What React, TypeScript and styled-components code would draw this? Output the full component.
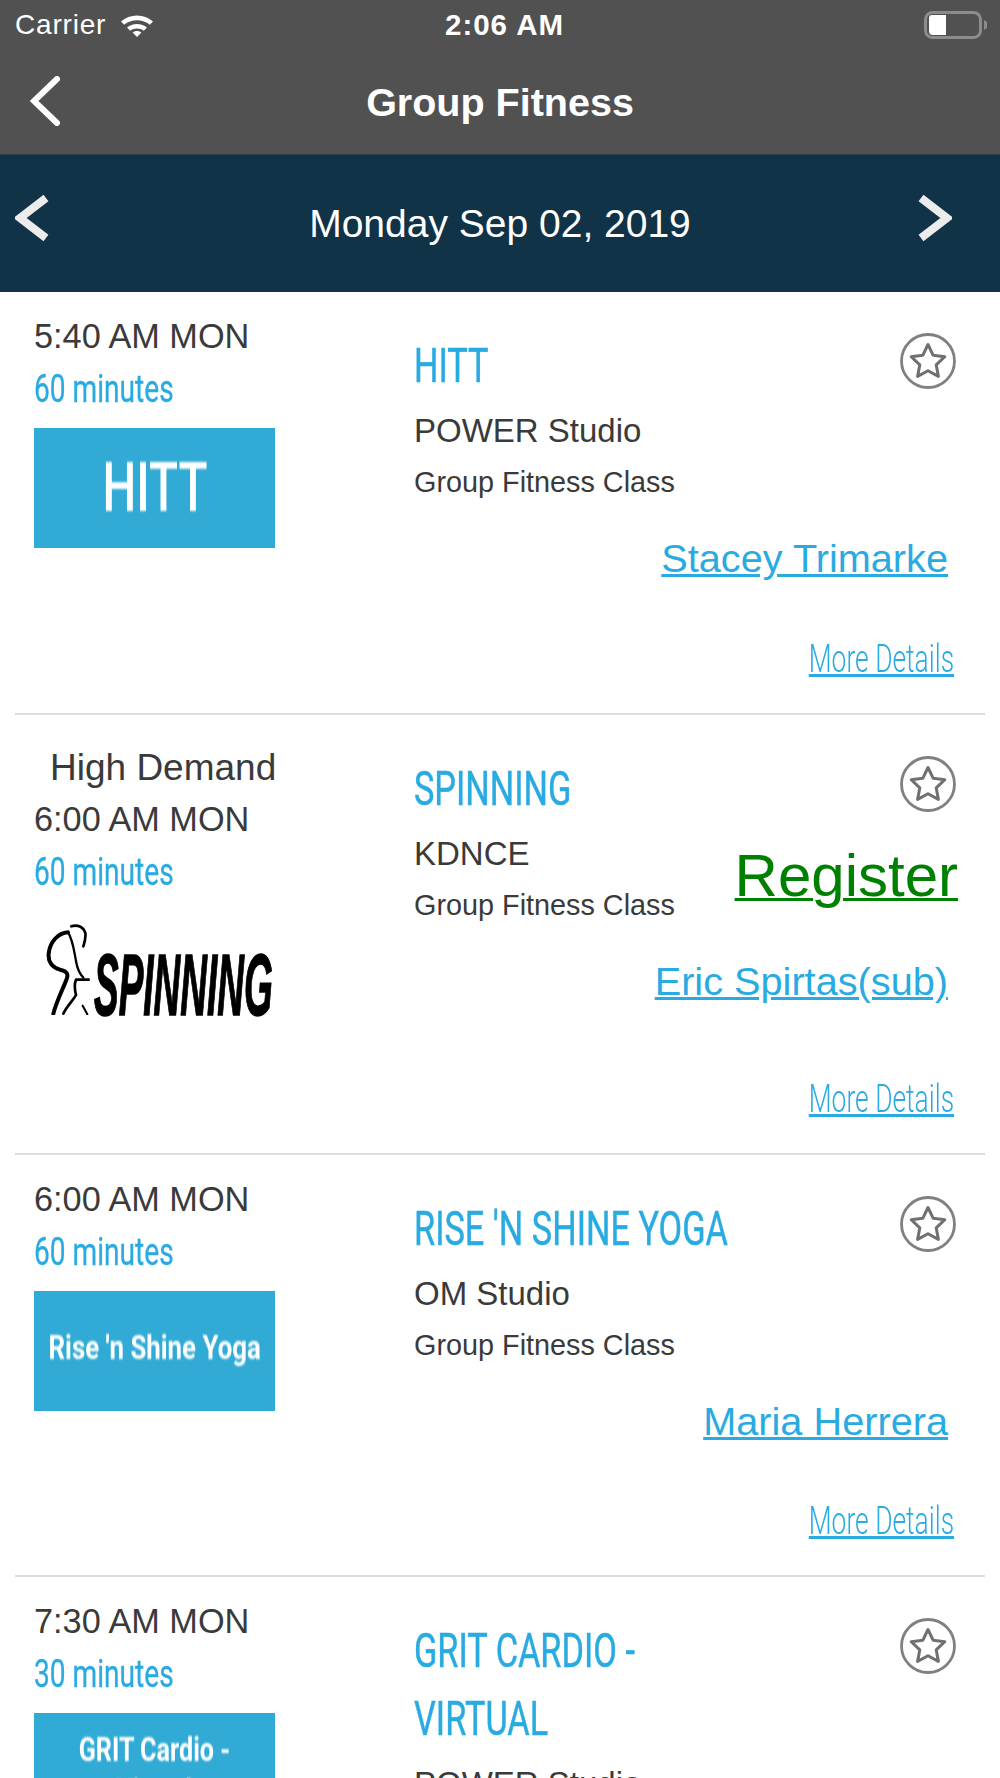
import React from "react";
import styled, { createGlobalStyle } from "styled-components";

type Session = {
  time: string;
  minutes: string;
  title: string;
  location: string;
  instructor?: string;
  highDemand?: boolean;
  register?: boolean;
  height?: number;
  logo: React.ReactNode;
};

const GlobalStyle = createGlobalStyle`
  html, body { margin: 0; padding: 0; background: #fff; }
  body { font-family: "Liberation Sans", Arial, sans-serif; }
`;

const Page = styled.div`
  width: 1000px;
  height: 1778px;
  overflow: hidden;
  background: #fff;
`;

const StatusBar = styled.div`
  height: 50px;
  background: #515151;
  display: grid;
  grid-template-columns: 1fr auto 1fr;
  align-items: center;
  padding: 0 12px 0 15px;
  color: #fff;
  font-size: 28px;
`;

const Carrier = styled.div`
  display: flex;
  align-items: center;
  gap: 14px;
  letter-spacing: 0.8px;
`;

const Clock = styled.div`
  margin-left: 6px;
  font-size: 29.5px;
  font-weight: 700;
  letter-spacing: 1px;
`;

const Battery = styled.div`
  display: flex;
  justify-content: flex-end;
`;

const NavBar = styled.div`
  height: 104px;
  background: #515151;
  border-bottom: 1px solid #2d3f4a;
  display: flex;
  align-items: center;
  justify-content: center;
  position: relative;
  color: #fff;
  font-size: 39.5px;
  font-weight: 700;
`;

const BackButton = styled.div`
  position: absolute;
  left: 30px;
  top: 26px;
  line-height: 0;
`;

const DateBar = styled.div`
  height: 137px;
  box-sizing: border-box;
  background: #113347;
  display: grid;
  grid-template-columns: 1fr auto 1fr;
  align-items: center;
  padding: 0 15px;
  color: #fff;
  font-size: 39px;
`;

const DateArrow = styled.div<{ $right?: boolean }>`
  line-height: 0;
  margin-bottom: 12px;
  filter: blur(0.6px);
  justify-self: ${(p) => (p.$right ? "end" : "start")};
  margin-right: ${(p) => (p.$right ? "33px" : "0")};
`;

const Row = styled.div<{ $height?: number }>`
  margin: 0 15px;
  min-height: ${(p) => (p.$height ? `${p.$height}px` : "auto")};
  box-sizing: border-box;
  border-bottom: 2px solid #dcdcdc;
  display: grid;
  grid-template-columns: 399px minmax(0, 1fr);
`;

const LeftCol = styled.div`
  padding: 20px 0 0 19px;
`;

const Demand = styled.div`
  margin: 9px 0 3px 16px;
  font-size: 37px;
  line-height: 48px;
  color: #3a3a3a;
`;

const Time = styled.div`
  font-size: 34.3px;
  line-height: 48px;
  color: #3a3a3a;
`;

const Squeezed = styled.span<{ $scale: number; $origin?: string; $underline?: boolean }>`
  display: inline-block;
  white-space: nowrap;
  font-family: Roboto, "Liberation Sans", sans-serif;
  text-decoration: ${(p) => (p.$underline ? "underline" : "none")};
  transform: scaleX(${(p) => p.$scale});
  transform-origin: ${(p) => p.$origin ?? "left"} center;
`;

const Minutes = styled.div`
  height: 58px;
  line-height: 58px;
  font-size: 38px;
  color: #29abe2;
  -webkit-text-stroke: 0.3px #29abe2;
  margin-bottom: 10px;
`;

const Thumb = styled.div<{ $lift: number }>`
  width: 241px;
  height: 120px;
  box-sizing: border-box;
  padding-bottom: ${(p) => p.$lift}px;
  background: #31abd6;
  color: #fff;
  display: flex;
  flex-direction: column;
  align-items: center;
  justify-content: center;
  overflow: hidden;
`;

const ThumbText = styled.div<{ $size: number; $scale: number; $weight: number }>`
  font-family: Roboto, "Liberation Sans", sans-serif;
  font-weight: ${(p) => p.$weight};
  font-size: ${(p) => p.$size}px;
  line-height: 1.25;
  white-space: nowrap;
  filter: blur(0.9px);
  transform: scaleX(${(p) => p.$scale});
`;

const SpinLogo = styled.div`
  width: 241px;
  height: 120px;
  display: flex;
  align-items: flex-end;
  padding: 0 0 16px 10px;
  box-sizing: border-box;
  filter: blur(0.5px);
`;

const SpinMark = styled.div`
  flex: none;
  line-height: 0;
`;

const SpinWord = styled.div`
  flex: none;
  font-weight: 700;
  font-style: italic;
  font-size: 88px;
  line-height: 60px;
  height: 60px;
  color: #000;
  -webkit-text-stroke: 1.5px #000;
  margin-left: 4px;
  transform: scaleX(0.42);
  transform-origin: left center;
  white-space: nowrap;
`;

const RightCol = styled.div`
  padding: 40px 27px 0 0;
  display: flex;
  flex-direction: column;
`;

const Info = styled.div`
  display: flex;
`;

const InfoText = styled.div`
  width: 320px;
  flex: none;
`;

const Title = styled.div`
  font-family: Roboto, "Liberation Sans", sans-serif;
  font-size: 49px;
  line-height: 68px;
  color: #29abe2;
  -webkit-text-stroke: 0.5px #29abe2;
  width: 478px;
  transform: scaleX(0.7);
  transform-origin: left center;
`;

const Location = styled.div`
  margin-top: 6px;
  font-size: 33px;
  line-height: 50px;
  color: #3a3a3a;
`;

const Kind = styled.div`
  margin-top: 1px;
  font-size: 28.8px;
  line-height: 50px;
  color: #3a3a3a;
`;

const SideCol = styled.div`
  flex: 1;
  min-width: 0;
  display: flex;
  flex-direction: column;
  align-items: flex-end;
`;

const Star = styled.div`
  margin: 1px 2px 0 0;
  line-height: 0;
  filter: blur(0.4px);
`;

const Register = styled.a`
  margin: 30px 0 0 0;
  font-size: 60px;
  line-height: 68px;
  color: #008000;
  text-decoration: underline;
  text-decoration-thickness: 3px;
  white-space: nowrap;
`;

const Instructor = styled.a`
  align-self: flex-end;
  margin: 26px 10px 0 0;
  font-size: 39.7px;
  line-height: 50px;
  color: #29abe2;
  text-decoration: underline;
  white-space: nowrap;
`;

const More = styled.a`
  align-self: flex-end;
  margin: auto 4px 28px 0;
  font-size: 38px;
  font-weight: 300;
  line-height: 52px;
  color: #29abe2;
`;

const Chevron = ({ dir, color, width, height, stroke, cap }: { dir: "left" | "right"; color: string; width: number; height: number; stroke: number; cap: "round" | "butt" }) => {
  const s = stroke / 2;
  const pts = dir === "left"
    ? `${width - s},${s} ${s + 1},${height / 2} ${width - s},${height - s}`
    : `${s},${s} ${width - s - 1},${height / 2} ${s},${height - s}`;
  return (
    <svg width={width} height={height} viewBox={`0 0 ${width} ${height}`}>
      <polyline points={pts} fill="none" stroke={color} strokeWidth={stroke} strokeLinecap={cap} strokeLinejoin="miter" />
    </svg>
  );
};

const WifiIcon = () => (
  <svg width="34" height="24" viewBox="0 0 34 24">
    <path d="M1 8.5C9.5 0.5 24.5 0.5 33 8.5L29.8 11.8C23 5.8 11 5.8 4.2 11.8Z" fill="#fff" />
    <path d="M7 14.5C12.5 9.7 21.5 9.7 27 14.5L23.8 17.8C20 14.6 14 14.6 10.2 17.8Z" fill="#fff" />
    <path d="M12.6 19.6C15.2 17.6 18.8 17.6 21.4 19.6L17 24Z" fill="#fff" />
  </svg>
);

const BatteryIcon = () => (
  <svg width="64" height="28" viewBox="0 0 64 28">
    <rect x="1.5" y="1.5" width="55" height="25" rx="7" fill="none" stroke="#8c8c8c" strokeWidth="3" />
    <path d="M5 7a3 3 0 0 1 3-3h14v20h-13a4 4 0 0 1-4-4Z" fill="#fff" />
    <path d="M60 9l3 2v6l-3 2Z" fill="#8c8c8c" />
  </svg>
);

const StarIcon = () => (
  <svg width="56" height="56" viewBox="0 0 56 56" fill="none">
    <circle cx="28" cy="28" r="26.5" stroke="#808080" strokeWidth="2.8" />
    <path
      d="M28 11.5l5.1 10.7 11.7 1.5-8.6 8.1 2.2 11.6L28 37.8l-10.4 5.6 2.2-11.6-8.6-8.1 11.7-1.5Z"
      stroke="#707070"
      strokeWidth="3"
      strokeLinejoin="round"
    />
  </svg>
);

// rider mark, traced in 3x crop coordinates
const SpinFigure = () => (
  <svg width="46" height="92" viewBox="30 36 138 276" fill="none" stroke="#000" strokeLinecap="round" strokeLinejoin="round">
    <path d="M102 64C72 66 48 92 44 128C42 152 54 170 78 176C98 180 104 188 98 204C86 236 68 270 58 308" strokeWidth="12" />
    <path d="M112 46C130 40 148 46 154 66C156 80 152 94 148 106" strokeWidth="8" />
    <path d="M102 64C116 84 120 118 126 150C130 174 138 190 148 200" strokeWidth="7" />
    <path d="M164 206L126 206C120 220 122 236 126 252C118 268 100 282 88 308" strokeWidth="8" />
    <path d="M146 284L160 310" strokeWidth="6" />
  </svg>
);

const BlueThumb = ({ lines, size, scale, weight, lift = 0 }: { lines: string[]; size: number; scale: number; weight: number; lift?: number }) => (
  <Thumb $lift={lift}>
    {lines.map((line) => (
      <ThumbText key={line} $size={size} $scale={scale} $weight={weight}>{line}</ThumbText>
    ))}
  </Thumb>
);

const sessions: Session[] = [
  {
    time: "5:40 AM MON",
    minutes: "60 minutes",
    title: "HITT",
    location: "POWER Studio",
    instructor: "Stacey Trimarke",
    height: 423,
    logo: <BlueThumb lines={["HITT"]} size={68} scale={0.7} weight={500} />,
  },
  {
    time: "6:00 AM MON",
    minutes: "60 minutes",
    title: "SPINNING",
    location: "KDNCE",
    instructor: "Eric Spirtas(sub)",
    highDemand: true,
    register: true,
    height: 440,
    logo: (
      <SpinLogo>
        <SpinMark>
          <SpinFigure />
        </SpinMark>
        <SpinWord>SPINNING</SpinWord>
      </SpinLogo>
    ),
  },
  {
    time: "6:00 AM MON",
    minutes: "60 minutes",
    title: "RISE 'N SHINE YOGA",
    location: "OM Studio",
    instructor: "Maria Herrera",
    height: 422,
    logo: <BlueThumb lines={["Rise 'n Shine Yoga"]} size={34} scale={0.76} weight={700} lift={8} />,
  },
  {
    time: "7:30 AM MON",
    minutes: "30 minutes",
    title: "GRIT CARDIO - VIRTUAL",
    location: "POWER Studio",
    logo: <BlueThumb lines={["GRIT Cardio -", "Virtual"]} size={34} scale={0.74} weight={700} lift={6} />,
  },
];

export default function App() {
  return (
    <Page>
      <GlobalStyle />
      <StatusBar>
        <Carrier>
          Carrier
          <WifiIcon />
        </Carrier>
        <Clock>2:06 AM</Clock>
        <Battery>
          <BatteryIcon />
        </Battery>
      </StatusBar>
      <NavBar>
        <BackButton>
          <Chevron dir="left" color="#fff" width={30} height={50} stroke={6} cap="round" />
        </BackButton>
        Group Fitness
      </NavBar>
      <DateBar>
        <DateArrow>
          <Chevron dir="left" color="#ececec" width={35} height={48} stroke={8} cap="butt" />
        </DateArrow>
        <div>Monday Sep 02, 2019</div>
        <DateArrow $right>
          <Chevron dir="right" color="#ececec" width={35} height={48} stroke={8} cap="butt" />
        </DateArrow>
      </DateBar>
      {sessions.map((s) => (
        <Row key={s.title} $height={s.height}>
          <LeftCol>
            {s.highDemand && <Demand>High Demand</Demand>}
            <Time>{s.time}</Time>
            <Minutes>
              <Squeezed $scale={0.74}>{s.minutes}</Squeezed>
            </Minutes>
            {s.logo}
          </LeftCol>
          <RightCol>
            <Info>
              <InfoText>
                <Title>{s.title}</Title>
                <Location>{s.location}</Location>
                <Kind>Group Fitness Class</Kind>
              </InfoText>
              <SideCol>
                <Star>
                  <StarIcon />
                </Star>
                {s.register && <Register>Register</Register>}
              </SideCol>
            </Info>
            {s.instructor && <Instructor>{s.instructor}</Instructor>}
            {s.instructor && (
              <More>
                <Squeezed $scale={0.695} $origin="right" $underline>More Details</Squeezed>
              </More>
            )}
          </RightCol>
        </Row>
      ))}
    </Page>
  );
}
